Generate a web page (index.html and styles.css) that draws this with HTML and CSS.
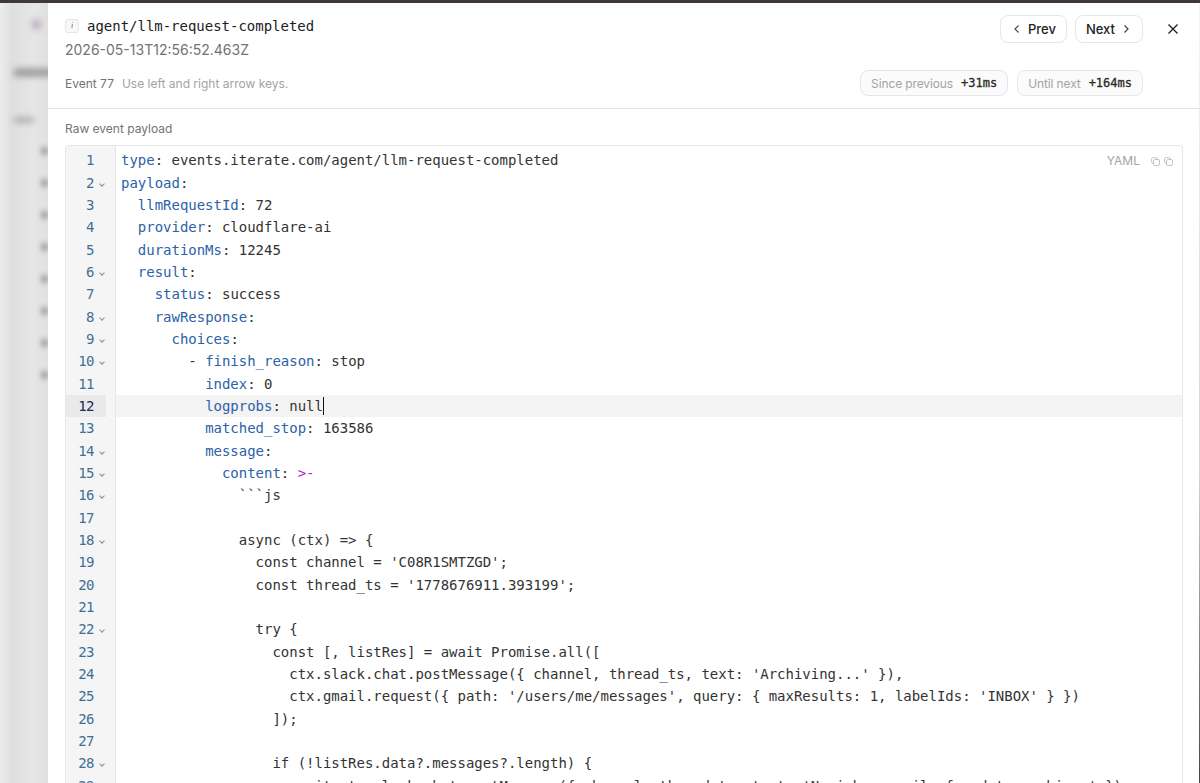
FILE: index.html
```html
<!DOCTYPE html>
<html>
<head>
    <meta http-equiv="Content-Type" content="text/html; charset=UTF-8">
    <title>Event detail</title>
    <link rel="stylesheet" href="styles.css">
</head>

<body>
    <div class="topbar"></div>
    <div class="screen">
        <div class="backdrop">
            <div class="blur-dot"></div>
            <div class="blur-title"></div>
            <div class="blur-label"></div>
            <div class="blur-item"></div>
            <div class="blur-item"></div>
            <div class="blur-item"></div>
            <div class="blur-item"></div>
            <div class="blur-item"></div>
            <div class="blur-item"></div>
            <div class="blur-item"></div>
            <div class="blur-item"></div>
        </div>

        <div class="modal">
            <div class="header">
                <div class="header-top">
                    <div>
                        <div class="title-row">
                            <span class="info-badge">i</span>
                            <span class="event-type">agent/llm-request-completed</span>
                        </div>
                        <div class="timestamp">2026-05-13T12:56:52.463Z</div>
                    </div>
                    <div class="actions">
                        <div class="btn">
                            <svg width="12" height="12" viewBox="0 0 12 12"><path d="M7.500 2.500 4 6l3.500 3.500"/></svg>
                            Prev
                        </div>
                        <div class="btn">
                            Next
                            <svg width="12" height="12" viewBox="0 0 12 12"><path d="M4.500 2.500 8 6 4.500 9.500"/></svg>
                        </div>
                        <svg class="close" width="14" height="14" viewBox="0 0 14 14"><path d="M2.500 2.500l9 9M11.500 2.500l-9 9"/></svg>
                    </div>
                </div>
                <div class="header-bottom">
                    <div class="hint"><span class="event-no">Event 77</span>Use left and right arrow keys.</div>
                    <div class="timings">
                        <div class="pill">Since previous <b>+31ms</b></div>
                        <div class="pill">Until next <b>+164ms</b></div>
                    </div>
                </div>
            </div>

            <div class="body">
                <div class="section-label">Raw event payload</div>
                <div class="editor">
                    <div class="editor-tools">
                        <span class="lang">YAML</span>
                        <svg width="9" height="9" viewBox="0 0 9 9"><rect x="0.500" y="0.500" width="6" height="6" rx="2"/><rect x="2.500" y="2.500" width="6" height="6" rx="1.500"/></svg>
                        <svg width="9" height="9" viewBox="0 0 9 9"><rect x="0.500" y="0.500" width="6" height="6" rx="2"/><rect x="2.500" y="2.500" width="6" height="6" rx="1.500"/></svg>
                    </div>
                    <div class="gutter">
                        <div class="num">1</div>
                        <div class="num fold">2</div>
                        <div class="num">3</div>
                        <div class="num">4</div>
                        <div class="num">5</div>
                        <div class="num fold">6</div>
                        <div class="num">7</div>
                        <div class="num fold">8</div>
                        <div class="num fold">9</div>
                        <div class="num fold">10</div>
                        <div class="num">11</div>
                        <div class="num active">12</div>
                        <div class="num">13</div>
                        <div class="num fold">14</div>
                        <div class="num fold">15</div>
                        <div class="num fold">16</div>
                        <div class="num">17</div>
                        <div class="num fold">18</div>
                        <div class="num">19</div>
                        <div class="num">20</div>
                        <div class="num">21</div>
                        <div class="num fold">22</div>
                        <div class="num">23</div>
                        <div class="num">24</div>
                        <div class="num">25</div>
                        <div class="num">26</div>
                        <div class="num">27</div>
                        <div class="num fold">28</div>
                        <div class="num">29</div>
                    </div>
                    <div class="code">
                        <div class="line"><span class="key">type</span>: events.iterate.com/agent/llm-request-completed</div>
                        <div class="line"><span class="key">payload</span>:</div>
                        <div class="line">  <span class="key">llmRequestId</span>: 72</div>
                        <div class="line">  <span class="key">provider</span>: cloudflare-ai</div>
                        <div class="line">  <span class="key">durationMs</span>: 12245</div>
                        <div class="line">  <span class="key">result</span>:</div>
                        <div class="line">    <span class="key">status</span>: success</div>
                        <div class="line">    <span class="key">rawResponse</span>:</div>
                        <div class="line">      <span class="key">choices</span>:</div>
                        <div class="line">        - <span class="key">finish_reason</span>: stop</div>
                        <div class="line">          <span class="key">index</span>: 0</div>
                        <div class="line active">          <span class="key">logprobs</span>: null<span class="cursor"></span></div>
                        <div class="line">          <span class="key">matched_stop</span>: 163586</div>
                        <div class="line">          <span class="key">message</span>:</div>
                        <div class="line">            <span class="key">content</span>: <span class="block">&gt;-</span></div>
                        <div class="line">              ```js</div>
                        <div class="line"> </div>
                        <div class="line">              async (ctx) =&gt; {</div>
                        <div class="line">                const channel = 'C08R1SMTZGD';</div>
                        <div class="line">                const thread_ts = '1778676911.393199';</div>
                        <div class="line"> </div>
                        <div class="line">                try {</div>
                        <div class="line">                  const [, listRes] = await Promise.all([</div>
                        <div class="line">                    ctx.slack.chat.postMessage({ channel, thread_ts, text: 'Archiving...' }),</div>
                        <div class="line">                    ctx.gmail.request({ path: '/users/me/messages', query: { maxResults: 1, labelIds: 'INBOX' } })</div>
                        <div class="line">                  ]);</div>
                        <div class="line"> </div>
                        <div class="line">                  if (!listRes.data?.messages?.length) {</div>
                        <div class="line">                    await ctx.slack.chat.postMessage({ channel, thread_ts, text: 'No inbox emails found to archive.' });</div>
                    </div>
                </div>
            </div>
        </div>
        <div class="right-edge"></div>
    </div>
</body>

</html>
```

FILE: styles.css
```css
html, body {
    height: 100%;
}
body {
    margin: 0;
    display: flex;
    flex-direction: column;
    overflow: hidden;
    font-family: Inter, "Liberation Sans", sans-serif;
    color: #333;
    background: #fff;
}
.topbar {
    height: 3px;
    flex: none;
    background: #3f3836;
}
.screen {
    flex: 1;
    display: flex;
    min-height: 0;
}

/* blurred page behind the modal */
.backdrop {
    width: 48px;
    flex: none;
    padding-left: 14px;
    box-sizing: border-box;
    overflow: hidden;
    background: linear-gradient(to right, #ececec, #dfdfdf 25%, #e6e6e6 70%, #e0e0e0);
}
.blur-dot {
    width: 9px;
    height: 9px;
    margin: 17px 0 0 18px;
    background: #b9afc0;
    filter: blur(3px);
}
.blur-title {
    width: 40px;
    height: 9px;
    margin-top: 39px;
    background: #a0a0a0;
    filter: blur(3px);
}
.blur-label {
    width: 20px;
    height: 6px;
    margin-top: 40px;
    background: #b0b0b0;
    filter: blur(3px);
}
.blur-item {
    width: 7px;
    height: 8px;
    margin: 24px 0 0 27px;
    background: #a3a3a3;
    filter: blur(2.500px);
}

.modal {
    flex: 1;
    min-width: 0;
    display: flex;
    flex-direction: column;
    background: #fff;
}
.right-edge {
    width: 1px;
    flex: none;
    background: linear-gradient(to bottom, #f4f4f4, #d5d5d5 60%, #444);
}
.header {
    height: 106px;
    flex: none;
    box-sizing: border-box;
    padding: 13px 16px 0 17px;
    border-bottom: 1px solid #e4e4e4;
}
.header-top {
    display: flex;
    justify-content: space-between;
    align-items: flex-start;
}
.title-row {
    display: flex;
    align-items: center;
    gap: 8px;
    height: 20px;
}
.info-badge {
    width: 12px;
    height: 12px;
    border: 1px solid #e6e6e6;
    border-radius: 3px;
    background: #f7f7f7;
    color: #666;
    font: italic 8px/12px "Liberation Serif", serif;
    text-align: center;
}
.event-type {
    font-family: "DejaVu Sans Mono", monospace;
    font-size: 14px;
    letter-spacing: -0.017px;
    color: #1c1c1c;
}
.timestamp {
    margin-top: 4px;
    font-size: 14px;
    line-height: 20px;
    color: #737373;
}
.actions {
    display: flex;
    align-items: center;
    margin-top: -1px;
}
.btn {
    height: 26px;
    display: flex;
    align-items: center;
    gap: 5px;
    margin-right: 8px;
    padding: 0 10px;
    border: 1px solid #e6e6e6;
    border-radius: 8px;
    font-size: 13px;
    font-weight: 500;
    color: #222;
}
.btn svg path {
    fill: none;
    stroke: #444;
    stroke-width: 1.2;
}
.close {
    margin: 0 3px 0 15px;
}
.close path {
    fill: none;
    stroke: #222;
    stroke-width: 1.4;
}
.header-bottom {
    display: flex;
    justify-content: space-between;
    align-items: center;
    margin-top: 10px;
    padding-right: 40px;
}
.hint {
    font-size: 12px;
    color: #a3a3a3;
}
.event-no {
    margin-right: 8px;
    color: #737373;
}
.timings {
    display: flex;
    gap: 9px;
}
.pill {
    height: 24px;
    display: flex;
    align-items: center;
    padding: 0 10px;
    border: 1px solid #e6e6e6;
    border-radius: 8px;
    background: #fbfbfb;
    font-size: 12px;
    letter-spacing: -0.12px;
    color: #a3a3a3;
}
.pill b {
    margin-left: 8px;
    font: 400 12px "DejaVu Sans Mono", monospace;
    letter-spacing: 0;
    -webkit-text-stroke: 0.3px #2a2a2a;
    color: #2a2a2a;
}

.body {
    flex: 1;
    min-height: 0;
    display: flex;
    flex-direction: column;
    padding: 12px 16px 0 17px;
}
.section-label {
    font-size: 12px;
    line-height: 16px;
    color: #737373;
    margin-bottom: 8px;
}
.editor {
    flex: 1;
    min-height: 0;
    position: relative;
    display: flex;
    overflow: hidden;
    padding-top: 3.200px;
    border: 1px solid #e6e6e6;
    border-bottom: 0;
    border-radius: 4px 4px 0 0;
    font-family: "DejaVu Sans Mono", monospace;
    font-size: 14px;
    line-height: 22.350px;
}
.editor-tools {
    position: absolute;
    top: 8px;
    right: 9px;
    display: flex;
    align-items: center;
    gap: 4px;
    font: 12px/14px Inter, "Liberation Sans", sans-serif;
    color: #a3a3a3;
}
.lang {
    margin-right: 7px;
}
.editor-tools rect {
    fill: #fff;
    stroke: #b5b5b5;
    stroke-width: 0.8;
}
.gutter {
    width: 49px;
    flex: none;
    margin-top: -3.200px;
    padding-top: 3.200px;
    background: #f5f5f5;
    border-right: 1px solid #e6e6e6;
    color: #3f6f96;
}
.num {
    position: relative;
    width: 40px;
    height: 22.350px;
    box-sizing: border-box;
    padding-right: 12px;
    text-align: right;
    letter-spacing: -0.5px;
}
.num.active {
    background: #e9e9e9;
    color: #1d2a5c;
}
.num.fold::after {
    content: "";
    position: absolute;
    top: 10px;
    right: 2px;
    width: 3px;
    height: 3px;
    border: solid #7d909e;
    border-width: 0 1px 1px 0;
    transform: rotate(45deg);
}
.code {
    flex: 1;
    min-width: 0;
}
.line {
    height: 22.350px;
    padding-left: 5px;
    white-space: pre;
    letter-spacing: -0.017px;
    color: #333;
}
.line.active {
    background: #f3f3f3;
}
.key {
    color: #2c62a8;
}
.block {
    color: #a626c4;
}
.cursor {
    display: inline-block;
    width: 1.500px;
    height: 18px;
    vertical-align: -4px;
    background: #111;
}
```
